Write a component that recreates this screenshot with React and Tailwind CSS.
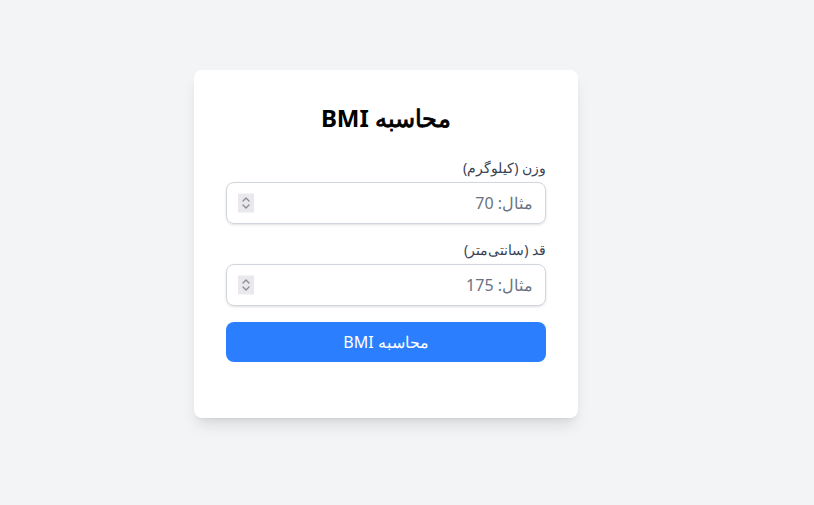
import React from "react";

function Spinner() {
  return (
    <span className="absolute left-3 top-1/2 -translate-y-1/2 w-[16px] h-[19px] bg-[#e9e9ed] flex items-center justify-center pointer-events-none">
      <svg width="10" height="15" viewBox="0 0 10 15" fill="none" stroke="#8a8a8f" strokeWidth="1.3" strokeLinecap="round" strokeLinejoin="round">
        <path d="M2 5.5 L5 2.5 L8 5.5" />
        <path d="M2 9.5 L5 12.5 L8 9.5" />
      </svg>
    </span>
  );
}

function Field({ label, placeholder }) {
  return (
    <div className="mb-4">
      <label className="block text-sm text-gray-700 mb-1">{label}</label>
      <div className="relative">
        <input
          type="text"
          inputMode="numeric"
          placeholder={placeholder}
          className="w-full px-3 py-2 border border-gray-300 rounded-lg shadow-sm text-base placeholder:text-gray-500 outline-none"
        />
        <Spinner />
      </div>
    </div>
  );
}

export default function App() {
  return (
    <div className="min-h-screen bg-gray-100 pt-[70px] pl-[194px] font-['Noto_Sans',sans-serif]">
      <div dir="rtl" className="w-[384px] bg-white rounded-lg shadow-lg p-8 pb-14">
        <h1 className="text-2xl font-bold text-center text-black mb-6">
          <span className="font-normal [-webkit-text-stroke:0.8px_black]">محاسبه</span> BMI
        </h1>
        <Field label="وزن (کیلوگرم)" placeholder="مثال: 70" />
        <Field label="قد (سانتی‌متر)" placeholder="مثال: 175" />
        <button className="w-full py-2 bg-blue-500 text-white rounded-lg text-base">محاسبه BMI</button>
      </div>
    </div>
  );
}
